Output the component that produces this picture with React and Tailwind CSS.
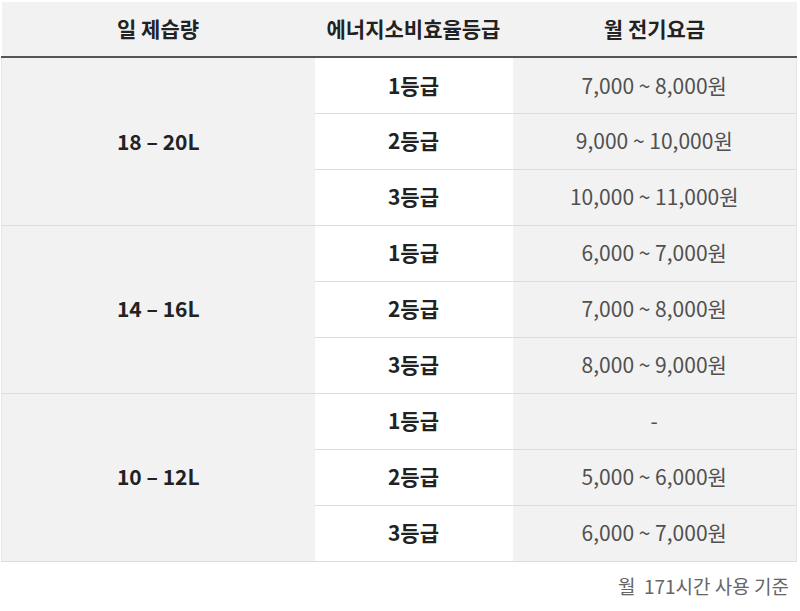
import React from "react";

const groups = [
  { size: "18 – 20L", rows: [["1등급", "7,000 ~ 8,000원"], ["2등급", "9,000 ~ 10,000원"], ["3등급", "10,000 ~ 11,000원"]] },
  { size: "14 – 16L", rows: [["1등급", "6,000 ~ 7,000원"], ["2등급", "7,000 ~ 8,000원"], ["3등급", "8,000 ~ 9,000원"]] },
  { size: "10 – 12L", rows: [["1등급", "-"], ["2등급", "5,000 ~ 6,000원"], ["3등급", "6,000 ~ 7,000원"]] },
];

export default function App() {
  return (
    <div className="w-[800px] h-[611px] bg-white pt-[2px] pl-[1px]" style={{ fontFamily: '"Noto Sans CJK KR", "Noto Sans", sans-serif' }}>
      <table className="w-[795px] border-collapse table-fixed text-[21px]">
        <colgroup>
          <col className="w-[313px]" />
          <col className="w-[198px]" />
          <col className="w-[284px]" />
        </colgroup>
        <thead>
          <tr className="h-[55px] bg-[#f2f2f2] border-b-2 border-[#555]">
            <th className="font-bold text-[#222] text-center">일 제습량</th>
            <th className="font-bold text-[#222] text-center">에너지소비효율등급</th>
            <th className="font-bold text-[#222] text-center">월 전기요금</th>
          </tr>
        </thead>
        <tbody>
          {groups.map((g) =>
            g.rows.map((r, i) => (
              <tr key={g.size + i} className="h-[56px] border-b border-[#dcdcdc]">
                {i === 0 && (
                  <td rowSpan={3} className="bg-[#f2f2f2] text-center font-bold text-[#222] border-b border-[#dcdcdc] border-l border-l-[#e6e6e6]">
                    {g.size}
                  </td>
                )}
                <td className="bg-white text-center font-bold text-[#222]">{r[0]}</td>
                <td className="bg-[#f2f2f2] text-center text-[#505050] border-r border-r-[#e6e6e6]">{r[1]}</td>
              </tr>
            ))
          )}
        </tbody>
      </table>
      <div className="w-[788px] text-right text-[19px] text-[#666] mt-[10px]">월&nbsp; 171시간 사용 기준</div>
    </div>
  );
}
